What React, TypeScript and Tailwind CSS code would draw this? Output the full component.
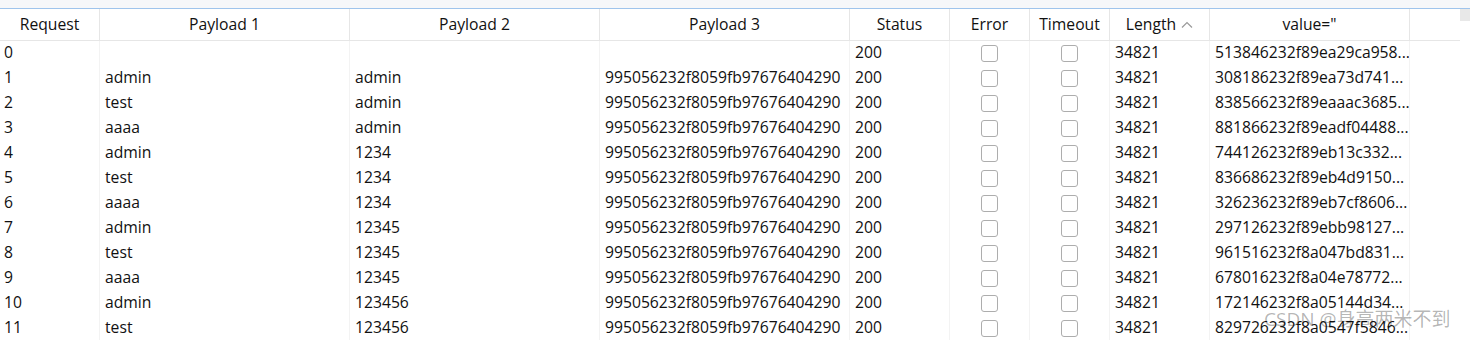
import React from "react";

type Row = {
  req: string;
  p1: string;
  p2: string;
  p3: string;
  value: string;
};

const P3 = "995056232f8059fb97676404290";

const rows: Row[] = [
  { req: "0", p1: "", p2: "", p3: "", value: "513846232f89ea29ca958..." },
  { req: "1", p1: "admin", p2: "admin", p3: P3, value: "308186232f89ea73d741..." },
  { req: "2", p1: "test", p2: "admin", p3: P3, value: "838566232f89eaaac3685..." },
  { req: "3", p1: "aaaa", p2: "admin", p3: P3, value: "881866232f89eadf04488..." },
  { req: "4", p1: "admin", p2: "1234", p3: P3, value: "744126232f89eb13c332..." },
  { req: "5", p1: "test", p2: "1234", p3: P3, value: "836686232f89eb4d9150..." },
  { req: "6", p1: "aaaa", p2: "1234", p3: P3, value: "326236232f89eb7cf8606..." },
  { req: "7", p1: "admin", p2: "12345", p3: P3, value: "297126232f89ebb98127..." },
  { req: "8", p1: "test", p2: "12345", p3: P3, value: "961516232f8a047bd831..." },
  { req: "9", p1: "aaaa", p2: "12345", p3: P3, value: "678016232f8a04e78772..." },
  { req: "10", p1: "admin", p2: "123456", p3: P3, value: "172146232f8a05144d34..." },
  { req: "11", p1: "test", p2: "123456", p3: P3, value: "829726232f8a0547f5846..." },
];

const Checkbox = () => (
  <div className="h-[17px] w-[17px] rounded-[3px] border border-[#adadad] bg-white" />
);

const HeadCell = ({ w, children }: { w: string; children?: React.ReactNode }) => (
  <div
    className={`${w} flex h-full shrink-0 items-center justify-center border-r border-[#e6e6e6]`}
  >
    {children}
  </div>
);

const Cell = ({
  w,
  center,
  children,
}: {
  w: string;
  center?: boolean;
  children?: React.ReactNode;
}) => (
  <div
    className={`${w} flex h-full shrink-0 items-center overflow-hidden whitespace-nowrap border-r border-[#f3f3f3] ${
      center ? "justify-center" : "pb-[2px] pl-[5px]"
    }`}
  >
    {children}
  </div>
);

export default function App() {
  return (
    <div
      className="relative h-[340px] w-[1470px] overflow-hidden bg-white text-[15.7px] text-[#111]"
      style={{ fontFamily: '"Open Sans", "Noto Sans CJK SC", sans-serif' }}
    >
      <div className="h-[8px] bg-[#f6f7f9]" />
      <div className="h-px bg-[#9fc4ec]" />

      <div className="flex">
        <div className="w-[1460px]">
          {/* header */}
          <div className="flex h-[32px] border-b border-[#e6e6e6]">
            <HeadCell w="w-[100px]">Request</HeadCell>
            <HeadCell w="w-[250px]">Payload 1</HeadCell>
            <HeadCell w="w-[250px]">Payload 2</HeadCell>
            <HeadCell w="w-[250px]">Payload 3</HeadCell>
            <HeadCell w="w-[100px]">Status</HeadCell>
            <HeadCell w="w-[80px]">Error</HeadCell>
            <HeadCell w="w-[80px]">Timeout</HeadCell>
            <HeadCell w="w-[100px]">
              <span>Length</span>
              <svg className="ml-[5px] h-[8px] w-[12px]" viewBox="0 0 12 8" fill="none">
                <path d="M1 6.5 L6 1.5 L11 6.5" stroke="#9a9a9a" strokeWidth="1.2" />
              </svg>
            </HeadCell>
            <HeadCell w="w-[200px]">value="</HeadCell>
            <div className="h-full flex-1" />
          </div>

          {/* body */}
          {rows.map((r) => (
            <div key={r.req} className="flex h-[25px]">
              <Cell w="w-[100px]">
                <span className="-ml-px">{r.req}</span>
              </Cell>
              <Cell w="w-[250px]">{r.p1}</Cell>
              <Cell w="w-[250px]">{r.p2}</Cell>
              <Cell w="w-[250px]">{r.p3}</Cell>
              <Cell w="w-[100px]">200</Cell>
              <Cell w="w-[80px]" center>
                <Checkbox />
              </Cell>
              <Cell w="w-[80px]" center>
                <Checkbox />
              </Cell>
              <Cell w="w-[100px]">34821</Cell>
              <Cell w="w-[200px]">{r.value}</Cell>
              <div className="h-full flex-1" />
            </div>
          ))}
        </div>
        <div className="w-[10px]">
          <div className="h-[12px] bg-[#e8e8e8]" />
        </div>
      </div>

      <div className="absolute left-[1264px] top-[305px] text-[19px] text-[#000]/30">
        CSDN @身高两米不到
      </div>
    </div>
  );
}
